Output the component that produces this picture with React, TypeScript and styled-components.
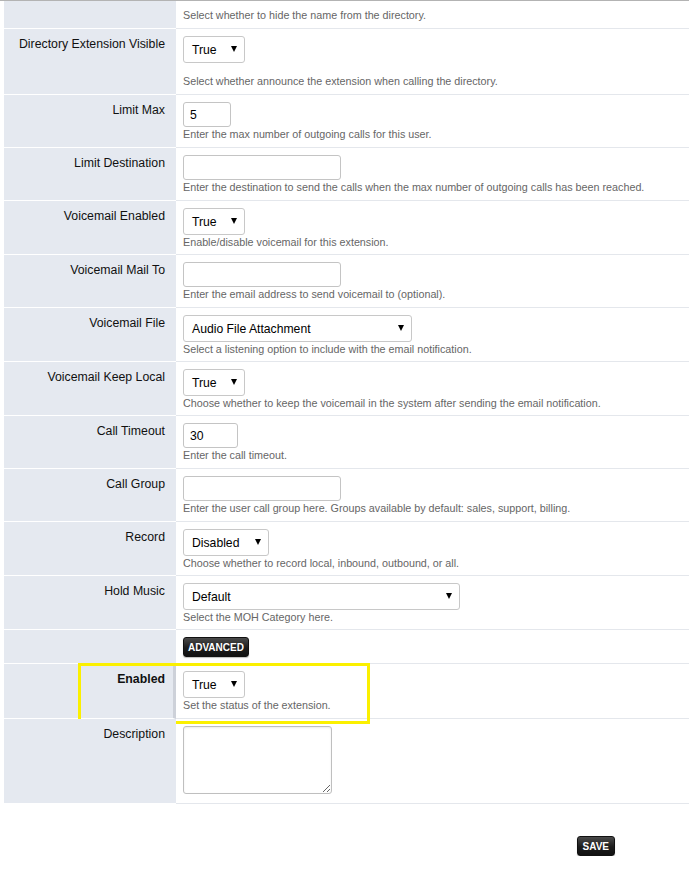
import React from "react";
import styled, { createGlobalStyle } from "styled-components";

const Global = createGlobalStyle`
  html, body { margin: 0; padding: 0; background: #fff; }
  body { font-family: "Liberation Sans", Arial, sans-serif; }
`;

const Page = styled.div`
  width: 689px;
  border-top: 1px solid #b3b3b3;
  padding-left: 4px;
  box-sizing: border-box;
`;

const Form = styled.div`
  display: flex;
  flex-direction: column;
`;

const Row = styled.div`
  position: relative;
  display: grid;
  grid-template-columns: 172px 1fr;
`;

const Label = styled.div<{ $strong?: boolean }>`
  background: #e5e9f0;
  border-bottom: 1px solid #fff;
  border-right: ${(p) => (p.$strong ? "3px solid #cdd1d9" : "0")};
  padding: 8px ${(p) => (p.$strong ? 8 : 11)}px 0 0;
  text-align: right;
  font-size: 12.3px;
  line-height: 14px;
  color: #111;
  font-weight: ${(p) => (p.$strong ? "bold" : "normal")};
  white-space: nowrap;
`;

const Value = styled.div<{ $pb: number }>`
  border-bottom: 1px solid #e4e7ec;
  padding: 7px 8px ${(p) => p.$pb}px 7px;
  display: flex;
  flex-direction: column;
  align-items: flex-start;
`;

const Hint = styled.div<{ $gap?: number }>`
  font-size: 10.75px;
  line-height: 14px;
  color: #666;
  margin-top: ${(p) => p.$gap ?? 0}px;
  white-space: nowrap;
`;

const SelectBox = styled.div<{ $w: number }>`
  width: ${(p) => p.$w}px;
  height: 27px;
  box-sizing: border-box;
  border: 1px solid #c8c8c8;
  border-radius: 3px;
  background: #fff;
  display: flex;
  align-items: center;
  justify-content: space-between;
  padding: 0 7px 0 8px;
  font-size: 12.2px;
  color: #000;
`;

const Arrow = styled.span`
  width: 0;
  height: 0;
  border-left: 3.5px solid transparent;
  border-right: 3.5px solid transparent;
  border-top: 6px solid #000;
  margin-top: -1px;
`;

const TextInput = styled.div<{ $w: number }>`
  width: ${(p) => p.$w}px;
  height: 25px;
  box-sizing: border-box;
  border: 1px solid #c4c4c4;
  border-radius: 3px;
  background: #fff;
  display: flex;
  align-items: center;
  padding: 0 6px;
  font-size: 12.2px;
  color: #000;
`;

const TextArea = styled.textarea`
  display: block;
  width: 149px;
  height: 68px;
  box-sizing: border-box;
  border: 1px solid #bfbfbf;
  border-radius: 3px;
  margin: 0 0 3px 0;
  padding: 4px;
  font-family: "Liberation Sans", Arial, sans-serif;
  font-size: 12px;
  box-shadow: inset 0 1px 2px rgba(0, 0, 0, 0.08);
`;

const DarkButton = styled.div<{ $px: number }>`
  display: inline-flex;
  align-items: center;
  justify-content: center;
  height: 20px;
  box-sizing: border-box;
  padding: 0 ${(p) => p.$px}px;
  border: 1px solid #111;
  border-radius: 3px;
  background: linear-gradient(#4a4a4a, #1c1c1c 55%, #111);
  color: #fff;
  font-size: 10px;
  font-weight: bold;
  box-shadow: 0 1px 1px rgba(0, 0, 0, 0.25);
`;

const Highlight = styled.div`
  position: absolute;
  left: 74px;
  top: -1px;
  width: 292px;
  height: 61px;
  box-sizing: border-box;
  border: 3px solid #fbf000;
  pointer-events: none;
`;

const Footer = styled.div`
  display: flex;
  justify-content: flex-end;
  padding: 32px 74px 0 0;
`;

type Field =
  | { kind: "select"; value: string; w: number }
  | { kind: "input"; value?: string; w: number }
  | { kind: "textarea" }
  | { kind: "button"; text: string }
  | { kind: "none" };

interface RowData {
  label: string;
  field: Field;
  hint?: string;
  gap?: number;
  pb?: number;
  strong?: boolean;
  highlight?: boolean;
}

const rows: RowData[] = [
  { label: "", field: { kind: "none" }, hint: "Select whether to hide the name from the directory." },
  {
    label: "Directory Extension Visible",
    field: { kind: "select", value: "True", w: 62 },
    hint: "Select whether announce the extension when calling the directory.",
    gap: 11,
  },
  { label: "Limit Max", field: { kind: "input", value: "5", w: 48 }, hint: "Enter the max number of outgoing calls for this user." },
  {
    label: "Limit Destination",
    field: { kind: "input", w: 158 },
    hint: "Enter the destination to send the calls when the max number of outgoing calls has been reached.",
  },
  {
    label: "Voicemail Enabled",
    field: { kind: "select", value: "True", w: 62 },
    hint: "Enable/disable voicemail for this extension.",
    pb: 5,
  },
  { label: "Voicemail Mail To", field: { kind: "input", w: 158 }, hint: "Enter the email address to send voicemail to (optional)." },
  {
    label: "Voicemail File",
    field: { kind: "select", value: "Audio File Attachment", w: 229 },
    hint: "Select a listening option to include with the email notification.",
    pb: 5,
  },
  {
    label: "Voicemail Keep Local",
    field: { kind: "select", value: "True", w: 62 },
    hint: "Choose whether to keep the voicemail in the system after sending the email notification.",
    pb: 5,
  },
  { label: "Call Timeout", field: { kind: "input", value: "30", w: 55 }, hint: "Enter the call timeout." },
  {
    label: "Call Group",
    field: { kind: "input", w: 158 },
    hint: "Enter the user call group here. Groups available by default: sales, support, billing.",
  },
  {
    label: "Record",
    field: { kind: "select", value: "Disabled", w: 86 },
    hint: "Choose whether to record local, inbound, outbound, or all.",
    pb: 5,
  },
  {
    label: "Hold Music",
    field: { kind: "select", value: "Default", w: 277 },
    hint: "Select the MOH Category here.",
    pb: 5,
  },
  { label: "", field: { kind: "button", text: "ADVANCED" } },
  {
    label: "Enabled",
    field: { kind: "select", value: "True", w: 62 },
    hint: "Set the status of the extension.",
    strong: true,
    highlight: true,
  },
  { label: "Description", field: { kind: "textarea" } },
];

function renderField(f: Field) {
  switch (f.kind) {
    case "select":
      return (
        <SelectBox $w={f.w}>
          <span>{f.value}</span>
          <Arrow />
        </SelectBox>
      );
    case "input":
      return <TextInput $w={f.w}>{f.value ?? ""}</TextInput>;
    case "textarea":
      return <TextArea />;
    case "button":
      return <DarkButton $px={4}>{f.text}</DarkButton>;
    default:
      return null;
  }
}

export default function App() {
  return (
    <>
      <Global />
      <Page>
        <Form>
          {rows.map((r, i) => (
            <Row key={i}>
              <Label $strong={r.strong}>{r.label}</Label>
              <Value $pb={r.pb ?? 6}>
                {renderField(r.field)}
                {r.hint && <Hint $gap={r.gap}>{r.hint}</Hint>}
              </Value>
              {r.highlight && <Highlight />}
            </Row>
          ))}
        </Form>
        <Footer>
          <DarkButton $px={5}>SAVE</DarkButton>
        </Footer>
      </Page>
    </>
  );
}
